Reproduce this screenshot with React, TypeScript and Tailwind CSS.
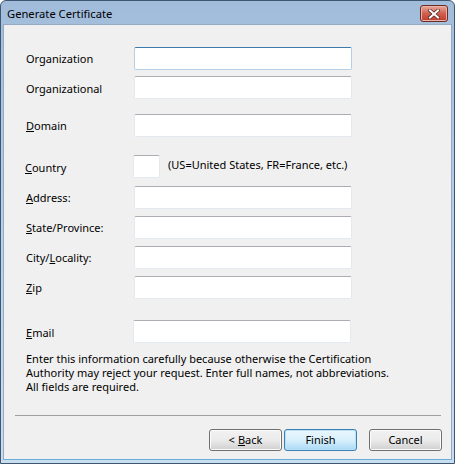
import React from "react";

const font = { fontFamily: '"Noto Sans", "Open Sans", sans-serif' };

function TextBox({ w = "w-[218px]", focused = false }: { w?: string; focused?: boolean }) {
  return focused ? (
    <div className={`${w} h-[23px] bg-white border border-[#b5cfe7] border-t-[#3d7bad] rounded-[2px]`} />
  ) : (
    <div className={`${w} h-[23px] bg-white border border-[#e3e9ef] border-t-[#abadb3] rounded-[2px]`} />
  );
}

function Row({
  mt,
  label,
  children,
}: {
  mt: string;
  label: React.ReactNode;
  children: React.ReactNode;
}) {
  return (
    <div className={`flex items-center h-[23px] ${mt}`}>
      <div className="w-[108px] shrink-0 pt-[2px]">{label}</div>
      {children}
    </div>
  );
}

function Btn({ children, def = false }: { children: React.ReactNode; def?: boolean }) {
  return (
    <div
      className={`w-[73px] h-[22px] rounded-[3px] flex items-center justify-center ${
        def
          ? "border border-[#3c7fb1] bg-gradient-to-b from-[#eaf6fd] via-[#d9f0fc] to-[#a7d9f5] shadow-[inset_0_0_0_1px_#b8e2f9]"
          : "border border-[#707070] bg-gradient-to-b from-[#f2f2f2] via-[#ebebeb] to-[#cfcfcf] shadow-[inset_0_0_0_1px_#fcfcfc]"
      }`}
    >
      {children}
    </div>
  );
}

export default function App() {
  return (
    <div
      className="w-[455px] h-[464px] border border-[#3f5670] rounded-t-[6px] bg-gradient-to-b from-[#a1bcda] via-[#b9d0ea] to-[#c9ddf1] flex flex-col text-[11px] text-black overflow-hidden"
      style={font}
    >
      {/* Title bar */}
      <div className="h-[23px] shrink-0 flex items-center justify-between pl-[6px] pr-[6px]">
        <span className="text-[11.2px] leading-none mt-[3px]">Generate Certificate</span>
        <div className="w-[28px] h-[17px] mt-[2px] rounded-[3px] border border-[#6e2b24] bg-gradient-to-b from-[#e8a89c] via-[#d0614f] to-[#c0392b] flex items-center justify-center shadow-[inset_0_0_0_1px_#eab3a8]">
          <svg width="12" height="10" viewBox="0 0 12 10">
            <path d="M2 1.5 L10 8.5 M10 1.5 L2 8.5" stroke="#5a2a25" strokeWidth="3.6" strokeLinecap="square" />
            <path d="M2 1.5 L10 8.5 M10 1.5 L2 8.5" stroke="#ffffff" strokeWidth="2" strokeLinecap="square" />
          </svg>
        </div>
      </div>

      {/* Content */}
      <div className="flex-1 mx-[2px] mb-[3px] bg-[#f0f0f0] border border-[#94aac4] border-b-[#6aaedb] flex flex-col pl-[22px] pt-[22px]">
        <Row mt="mt-0" label={<span>Organization</span>}>
          <TextBox focused />
        </Row>
        <Row mt="mt-[6px]" label={<span className="relative top-[1px]">Organizational</span>}>
          <TextBox />
        </Row>
        <Row mt="mt-[15px]" label={<span><u>D</u>omain</span>}>
          <TextBox />
        </Row>
        <Row
          mt="mt-[18px]"
          label={<span className="relative top-[1px] -left-px"><u>C</u>ountry</span>}
        >
          <div className="-ml-px flex items-center">
            <TextBox w="w-[27px]" />
            <span className="ml-[8px] relative -top-[1px]">(US=United States, FR=France, etc.)</span>
          </div>
        </Row>
        <Row mt="mt-[8px]" label={<span><u>A</u>ddress:</span>}>
          <TextBox />
        </Row>
        <Row mt="mt-[7px]" label={<span><u>S</u>tate/Province:</span>}>
          <TextBox />
        </Row>
        <Row mt="mt-[7px]" label={<span>City/<u>L</u>ocality:</span>}>
          <TextBox />
        </Row>
        <Row mt="mt-[7px]" label={<span><u>Z</u>ip</span>}>
          <TextBox />
        </Row>
        <Row mt="mt-[21px]" label={<span className="relative top-[1px]"><u>E</u>mail</span>}>
          <div className="-ml-px">
            <TextBox />
          </div>
        </Row>
        <p className="mt-[9px] leading-[14px]">
          Enter this information carefully because otherwise the Certification
          <br />
          Authority may reject your request. Enter full names, not abbreviations.
          <br />
          All fields are required.
        </p>
        <div className="flex-1" />
        <div className="-ml-[11px] mr-[10px] h-px bg-[#a0a0a0]" />
        <div className="flex justify-end pr-[9px] mt-[13px] mb-[8px]">
          <Btn>
            &lt; <u className="ml-[3px]">B</u>ack
          </Btn>
          <div className="w-[2px]" />
          <Btn def>Finish</Btn>
          <div className="w-[12px]" />
          <Btn>Cancel</Btn>
        </div>
      </div>
    </div>
  );
}
